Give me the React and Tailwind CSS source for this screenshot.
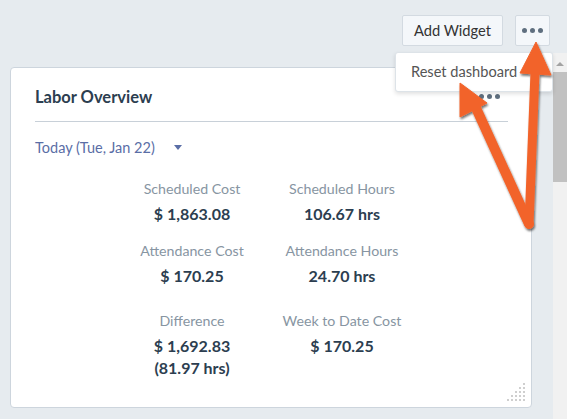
const stats = [
  { label: 'Scheduled Cost', value: ['$ 1,863.08'] },
  { label: 'Scheduled Hours', value: ['106.67 hrs'] },
  { label: 'Attendance Cost', value: ['$ 170.25'] },
  { label: 'Attendance Hours', value: ['24.70 hrs'] },
  { label: 'Difference', value: ['$ 1,692.83', '(81.97 hrs)'] },
  { label: 'Week to Date Cost', value: ['$ 170.25'] },
];

function Dots({ className = '' }) {
  return (
    <span className={`flex items-center gap-[3px] ${className}`}>
      <span className="w-[5px] h-[5px] rounded-full bg-[#5f6f7f]" />
      <span className="w-[5px] h-[5px] rounded-full bg-[#5f6f7f]" />
      <span className="w-[5px] h-[5px] rounded-full bg-[#5f6f7f]" />
    </span>
  );
}

function ResizeHandle() {
  const dots = [];
  for (let r = 0; r < 5; r++) {
    for (let c = 0; c < 5; c++) {
      if (r + c >= 4) dots.push(<rect key={`${r}-${c}`} x={c * 4} y={r * 4} width="2" height="2" fill="#cfcfcf" />);
    }
  }
  return (
    <svg width="20" height="20" className="absolute right-[4px] bottom-[4px]">
      {dots}
    </svg>
  );
}

function Arrows() {
  return (
    <svg width="567" height="419" className="absolute inset-0 pointer-events-none">
      <defs>
        <filter id="arrowShadow" x="-20%" y="-20%" width="140%" height="140%">
          <feDropShadow dx="1" dy="2" stdDeviation="1.2" floodColor="#000" floodOpacity="0.55" />
        </filter>
      </defs>
      <g filter="url(#arrowShadow)" fill="#f2642b" stroke="#f2642b">
        <line x1="529" y1="224" x2="535" y2="72" strokeWidth="9" strokeLinecap="round" />
        <polygon points="536,42 551,75 520,73" strokeWidth="1" strokeLinejoin="round" />
        <line x1="529" y1="224" x2="476" y2="108" strokeWidth="10" strokeLinecap="round" />
        <polygon points="460,83 487,103 460,117" strokeWidth="1" strokeLinejoin="round" />
      </g>
    </svg>
  );
}

export default function App() {
  return (
    <div
      className="relative w-[567px] h-[419px] overflow-hidden bg-[#e6ebef] text-[#2c3e50]"
      style={{ fontFamily: 'Lato, "Open Sans", sans-serif' }}
    >
      {/* Toolbar */}
      <div className="h-[53px] flex items-start justify-end gap-[12px] pt-[15px] pr-[17px]">
        <button className="h-[31px] w-[101px] rounded-[2px] border border-[#d3dae1] bg-[#f4f7fa] text-[14.7px] text-[#333]">
          Add Widget
        </button>
        <button className="h-[31px] w-[35px] rounded-[2px] border border-[#d3dae1] bg-[#f4f7fa] flex items-center justify-center">
          <Dots />
        </button>
      </div>

      {/* Dashboard area */}
      <div className="flex h-[366px]">
        <div className="flex-1 pt-[14px] pl-[10px] pr-[21px]">
          <div className="relative h-[341px] rounded-[4px] border border-[#cdd5dd] bg-white pt-[19px] pl-[24px] pr-[23px]">
            <div className="flex items-center justify-between h-[20px]">
              <h2 className="text-[16.5px] font-bold text-[#2c3e50]">Labor Overview</h2>
              <Dots className="mr-[8px] -mt-[2px]" />
            </div>
            <div className="mt-[14px] border-t border-[#c8d0d8]" />
            <div className="mt-[15px] flex items-center text-[14.5px] text-[#5a6ea6]">
              <span>Today (Tue, Jan 22)</span>
              <span className="ml-[19px] w-0 h-0 border-l-[4px] border-r-[4px] border-t-[5px] border-l-transparent border-r-transparent border-t-[#5a6ea6]" />
            </div>
            <div className="mt-[20px] ml-[82px] grid grid-cols-[150px_150px]">
              {stats.map((s, i) => (
                <div key={s.label} className={`text-center ${i >= 4 ? 'mt-[24px]' : i >= 2 ? 'mt-[16px]' : ''}`}>
                  <div className="text-[14.2px] leading-[20px] text-[#8795a2]">{s.label}</div>
                  <div className="mt-[4px]">
                    {s.value.map((v) => (
                      <div key={v} className="text-[16px] leading-[22px] font-bold text-[#2c3e50]">
                        {v}
                      </div>
                    ))}
                  </div>
                </div>
              ))}
            </div>
            <ResizeHandle />
          </div>
        </div>

        {/* Scrollbar */}
        <div className="w-[14px] bg-[#f1f1f1] flex flex-col items-center">
          <span className="mt-[9px] w-0 h-0 border-l-[4px] border-r-[4px] border-b-[4px] border-l-transparent border-r-transparent border-b-[#a3a3a3]" />
          <div className="mt-[6px] w-[14px] h-[110px] bg-[#c1c1c1]" />
        </div>
      </div>

      {/* Dashboard menu */}
      <div className="absolute left-[395px] top-[52px] w-[158px] h-[40px] rounded-[3px] border border-[#dde3e8] bg-white shadow-[0_2px_4px_rgba(0,0,0,0.12)] flex items-center pl-[15px] text-[14.6px] text-[#555]">
        Reset dashboard
      </div>

      <Arrows />
    </div>
  );
}
